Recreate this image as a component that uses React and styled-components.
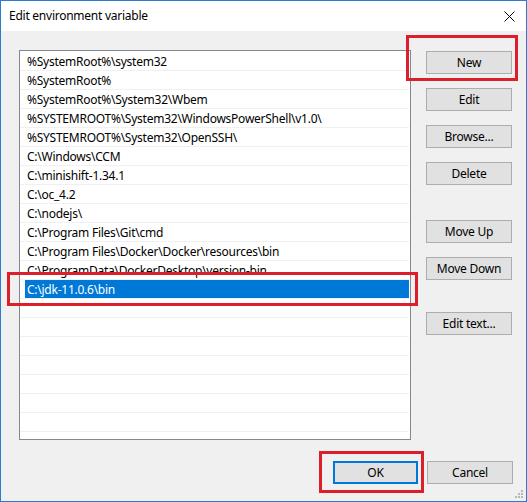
import styled, { createGlobalStyle } from 'styled-components';

const paths = [
  '%SystemRoot%\\system32',
  '%SystemRoot%',
  '%SystemRoot%\\System32\\Wbem',
  '%SYSTEMROOT%\\System32\\WindowsPowerShell\\v1.0\\',
  '%SYSTEMROOT%\\System32\\OpenSSH\\',
  'C:\\Windows\\CCM',
  'C:\\minishift-1.34.1',
  'C:\\oc_4.2',
  'C:\\nodejs\\',
  'C:\\Program Files\\Git\\cmd',
  'C:\\Program Files\\Docker\\Docker\\resources\\bin',
  'C:\\ProgramData\\DockerDesktop\\version-bin',
  'C:\\jdk-11.0.6\\bin',
];

const EMPTY_ROWS = 8;

const sideButtons = [
  { label: 'New', top: 1 },
  { label: 'Edit', top: 14 },
  { label: 'Browse...', top: 14 },
  { label: 'Delete', top: 14 },
  { label: 'Move Up', top: 35 },
  { label: 'Move Down', top: 14 },
  { label: 'Edit text...', top: 32 },
];

const GlobalStyle = createGlobalStyle`
  html, body {
    margin: 0;
    padding: 0;
    background: #ffffff;
  }
  * {
    box-sizing: border-box;
  }
`;

const Window = styled.div`
  position: relative;
  width: 527px;
  height: 502px;
  border: 1px solid #2b7bd0;
  background: #f0f0f0;
  display: flex;
  flex-direction: column;
  font-family: 'Noto Sans', 'Open Sans', sans-serif;
  font-size: 12px;
  letter-spacing: -0.25px;
  color: #000;
`;

const TitleBar = styled.div`
  height: 30px;
  background: #ffffff;
  display: flex;
  align-items: center;
  justify-content: space-between;
  padding: 0 11px 0 8px;
`;

const Title = styled.span`
  font-size: 12px;
  line-height: 16px;
`;

const Body = styled.div`
  flex: 1;
  display: flex;
  flex-direction: column;
  padding: 19px 13px 0 18px;
`;

const Main = styled.div`
  display: flex;
  gap: 15px;
`;

const ListBox = styled.div`
  width: 392px;
  height: 390px;
  border: 1px solid #828790;
  background: #ffffff;
  padding: 1px 1px 0 0;
  overflow: hidden;
`;

const Row = styled.div`
  height: 19px;
  border-bottom: 1px solid #f0f0f0;
  padding: 1px 0 0 7px;
  line-height: 17px;
  white-space: nowrap;
`;

const SelectedRow = styled(Row)`
  padding: 0 0 0 5px;
`;

const EditBox = styled.div`
  height: 18px;
  background: #0078d7;
  color: #ffffff;
  padding: 1px 0 0 2px;
  line-height: 17px;
`;

const ButtonColumn = styled.div`
  display: flex;
  flex-direction: column;
  width: 86px;
`;

const Button = styled.button`
  width: ${(p) => p.$width || 86}px;
  height: 23px;
  margin-top: ${(p) => p.$top || 0}px;
  padding: 0;
  background: #e1e1e1;
  border: 1px solid #adadad;
  box-shadow: ${(p) => (p.$default ? 'inset 0 0 0 1px #0078d7' : 'none')};
  border-color: ${(p) => (p.$default ? '#0078d7' : '#adadad')};
  font-family: inherit;
  font-size: 12px;
  letter-spacing: inherit;
  color: #000;
  line-height: 21px;
`;

const Footer = styled.div`
  display: flex;
  justify-content: flex-end;
  gap: 9px;
  margin-top: 21px;
`;

const Marker = styled.div`
  position: absolute;
  left: ${(p) => p.$x}px;
  top: ${(p) => p.$y}px;
  width: ${(p) => p.$w}px;
  height: ${(p) => p.$h}px;
  border: 3px solid #dc1f2b;
  pointer-events: none;
`;

const Grip = styled.svg`
  position: absolute;
  right: 3px;
  bottom: 3px;
`;

const CloseIcon = () => (
  <svg width="11" height="11" viewBox="0 0 11 11">
    <path d="M0.5 0.5 L10.5 10.5 M10.5 0.5 L0.5 10.5" stroke="#000" strokeWidth="1" />
  </svg>
);

export default function App() {
  const last = paths.length - 1;
  return (
    <>
      <GlobalStyle />
      <Window>
        <TitleBar>
          <Title>Edit environment variable</Title>
          <CloseIcon />
        </TitleBar>
        <Body>
          <Main>
            <ListBox>
              {paths.map((p, i) =>
                i === last ? (
                  <SelectedRow key={p}>
                    <EditBox>{p}</EditBox>
                  </SelectedRow>
                ) : (
                  <Row key={p}>{p}</Row>
                )
              )}
              {Array.from({ length: EMPTY_ROWS }).map((_, i) => (
                <Row key={`empty-${i}`} />
              ))}
            </ListBox>
            <ButtonColumn>
              {sideButtons.map((b) => (
                <Button key={b.label} $top={b.top}>
                  {b.label}
                </Button>
              ))}
            </ButtonColumn>
          </Main>
          <Footer>
            <Button $width={85} $default>
              OK
            </Button>
            <Button>Cancel</Button>
          </Footer>
        </Body>
        <Grip width="8" height="8" viewBox="0 0 8 8">
          <rect x="6" y="0" width="2" height="2" fill="#b8b8b8" />
          <rect x="3" y="3" width="2" height="2" fill="#b8b8b8" />
          <rect x="6" y="3" width="2" height="2" fill="#b8b8b8" />
          <rect x="0" y="6" width="2" height="2" fill="#b8b8b8" />
          <rect x="3" y="6" width="2" height="2" fill="#b8b8b8" />
          <rect x="6" y="6" width="2" height="2" fill="#b8b8b8" />
        </Grip>
        <Marker $x={405} $y={34} $w={112} $h={46} />
        <Marker $x={6} $y={271} $w={411} $h={34} />
        <Marker $x={318} $y={450} $w={105} $h={42} />
      </Window>
    </>
  );
}
